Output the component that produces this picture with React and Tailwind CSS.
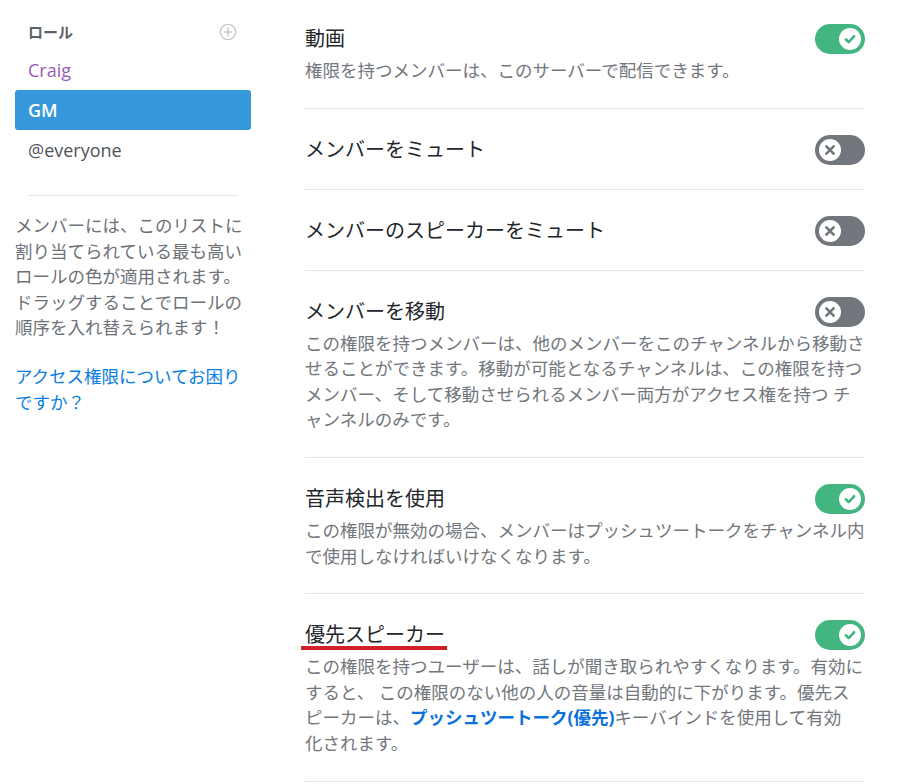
import React from "react";

const roles = [
  { name: "Craig", color: "text-[#9b59b6]" },
  { name: "GM", selected: true },
  { name: "@everyone", color: "text-[#4f545c]" },
];

function Toggle({ on }) {
  return (
    <div
      className={`relative w-[50px] h-[30px] rounded-full flex-shrink-0 flex items-center px-[4px] ${
        on ? "bg-[#43b581] justify-end" : "bg-[#72767d] justify-start"
      }`}
    >
      <div className="w-[22px] h-[22px] rounded-full bg-white flex items-center justify-center">
        {on ? (
          <svg width="18" height="18" viewBox="0 0 20 20" fill="none">
            <path d="M5.5 10.5l3 3 6-6.5" stroke="#43b581" strokeWidth="3" strokeLinecap="round" strokeLinejoin="round" />
          </svg>
        ) : (
          <svg width="16" height="16" viewBox="0 0 20 20" fill="none">
            <path d="M5.5 5.5l9 9M14.5 5.5l-9 9" stroke="#72767d" strokeWidth="3.4" strokeLinecap="round" />
          </svg>
        )}
      </div>
    </div>
  );
}

function Permission({ title, on, first, underline, children }) {
  return (
    <div className={`${first ? "pt-[24px]" : "pt-[26px]"} pb-[24px] border-b border-[#e3e5e8]`}>
      <div className="flex items-center justify-between h-[30px]">
        <span className="relative text-[20px] leading-[30px] text-[#23262a]">
          {title}
          {underline && (
            <span className="absolute left-[-4px] right-[-2px] top-[26px] h-[4px] bg-[#cf2127]" />
          )}
        </span>
        <Toggle on={on} />
      </div>
      {children && (
        <p className="mt-[4px] text-[17.5px] leading-[25.6px] text-[#72767d]">{children}</p>
      )}
    </div>
  );
}

export default function App() {
  return (
    <div className="w-[897px] h-[784px] overflow-hidden bg-white font-['Open_Sans','Noto_Sans_CJK_JP',sans-serif] flex pl-[15px]">
      <aside className="w-[236px] flex-shrink-0">
        <div className="mt-[20px] h-[24px] flex items-center justify-between pl-[13px] pr-[14px]">
          <span className="text-[15px] font-bold text-[#5d6269]">ロール</span>
          <svg width="18" height="18" viewBox="0 0 20 20" fill="none">
            <circle cx="10" cy="10" r="8.5" stroke="#c7c9cc" strokeWidth="1.6" />
            <path d="M10 6v8M6 10h8" stroke="#c7c9cc" strokeWidth="1.8" strokeLinecap="round" />
          </svg>
        </div>
        <div className="mt-[6px]">
          {roles.map((r) => (
            <div
              key={r.name}
              className={`h-[40px] flex items-center px-[13px] rounded-[3px] text-[18px] ${
                r.selected ? "bg-[#3498db] text-white font-semibold" : r.color
              }`}
            >
              {r.name}
            </div>
          ))}
        </div>
        <div className="mt-[25px] mx-[13px] border-t border-[#e3e5e8]" />
        <p className="mt-[17px] text-[17.5px] leading-[25.6px] text-[#6d7278]">
          メンバーには、このリストに割り当てられている最も高いロールの色が適用されます。ドラッグすることでロールの順序を入れ替えられます！
        </p>
        <p className="mt-[23px] text-[17.5px] leading-[25.6px] text-[#0b7ee0]">
          アクセス権限についてお困りですか？
        </p>
      </aside>

      <main className="ml-[54px] w-[560px] flex-shrink-0">
        <Permission title="動画" on first>
          権限を持つメンバーは、このサーバーで配信できます。
        </Permission>
        <Permission title="メンバーをミュート" />
        <Permission title="メンバーのスピーカーをミュート" />
        <Permission title="メンバーを移動">
          この権限を持つメンバーは、他のメンバーをこのチャンネルから移動させることができます。移動が可能となるチャンネルは、この権限を持つメンバー、そして移動させられるメンバー両方がアクセス権を持つ チャンネルのみです。
        </Permission>
        <Permission title="音声検出を使用" on>
          この権限が無効の場合、メンバーはプッシュツートークをチャンネル内で使用しなければいけなくなります。
        </Permission>
        <Permission title="優先スピーカー" on underline>
          この権限を持つユーザーは、話しが聞き取られやすくなります。有効にすると、 この権限のない他の人の音量は自動的に下がります。優先スピーカーは、
          <span className="font-bold text-[#0b6fdc]">プッシュツートーク(優先)</span>
          キーバインドを使用して有効
          <br />
          化されます。
        </Permission>
      </main>
    </div>
  );
}
